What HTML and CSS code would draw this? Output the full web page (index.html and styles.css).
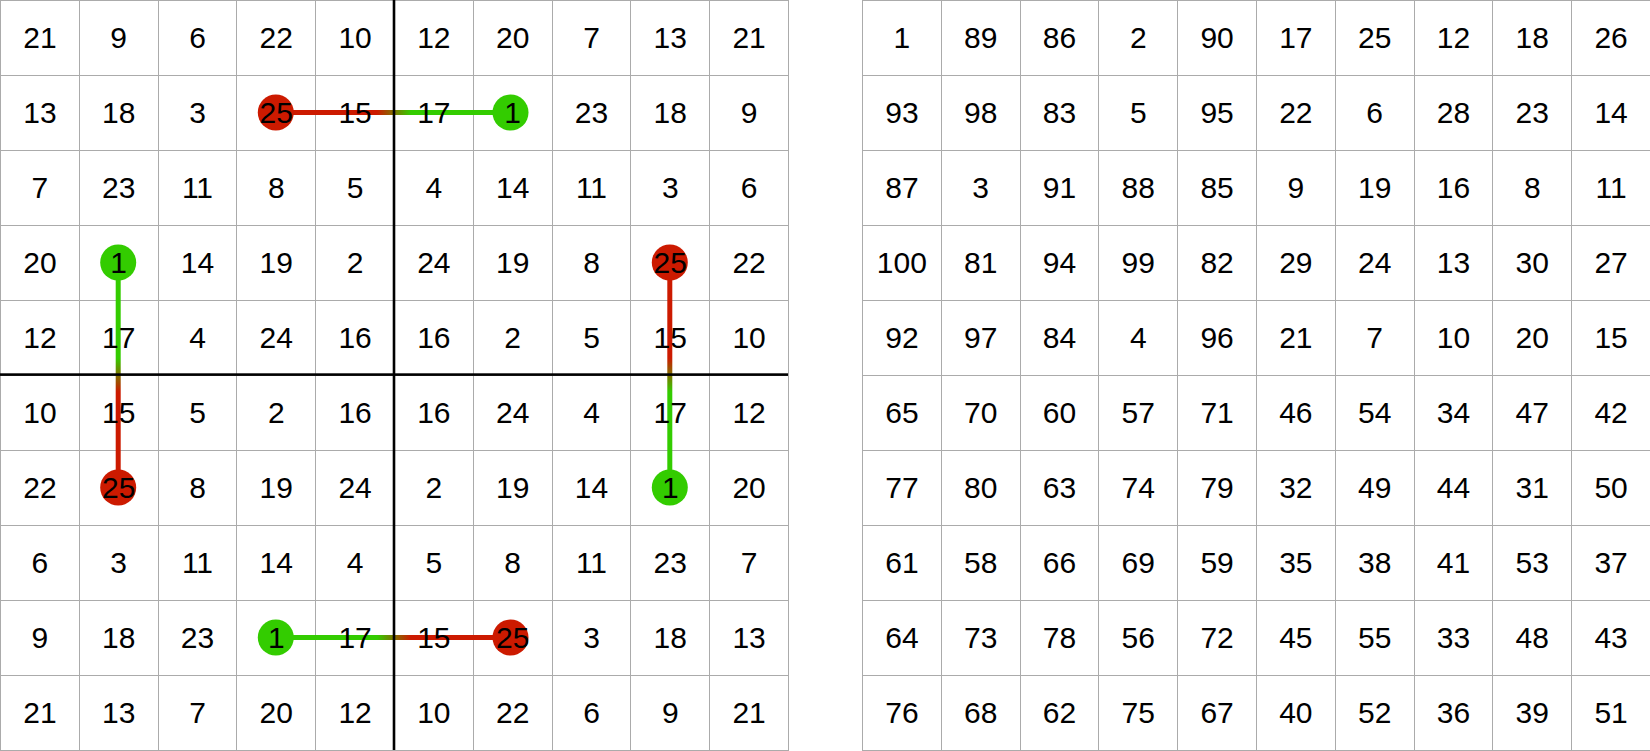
FILE: index.html
```html
<!DOCTYPE html>
<html>
<head>
<meta charset="utf-8">
<link rel="stylesheet" href="styles.css">
</head>
<body>
<div class="page">
  <div class="board board-left">
    <div class="c"><span>21</span></div><div class="c"><span>9</span></div><div class="c"><span>6</span></div><div class="c"><span>22</span></div><div class="c"><span>10</span></div><div class="c"><span>12</span></div><div class="c"><span>20</span></div><div class="c"><span>7</span></div><div class="c"><span>13</span></div><div class="c"><span>21</span></div>
    <div class="c"><span>13</span></div><div class="c"><span>18</span></div><div class="c"><span>3</span></div><div class="c"><span>25</span></div><div class="c"><span>15</span></div><div class="c"><span>17</span></div><div class="c"><span>1</span></div><div class="c"><span>23</span></div><div class="c"><span>18</span></div><div class="c"><span>9</span></div>
    <div class="c"><span>7</span></div><div class="c"><span>23</span></div><div class="c"><span>11</span></div><div class="c"><span>8</span></div><div class="c"><span>5</span></div><div class="c"><span>4</span></div><div class="c"><span>14</span></div><div class="c"><span>11</span></div><div class="c"><span>3</span></div><div class="c"><span>6</span></div>
    <div class="c"><span>20</span></div><div class="c"><span>1</span></div><div class="c"><span>14</span></div><div class="c"><span>19</span></div><div class="c"><span>2</span></div><div class="c"><span>24</span></div><div class="c"><span>19</span></div><div class="c"><span>8</span></div><div class="c"><span>25</span></div><div class="c"><span>22</span></div>
    <div class="c"><span>12</span></div><div class="c"><span>17</span></div><div class="c"><span>4</span></div><div class="c"><span>24</span></div><div class="c"><span>16</span></div><div class="c"><span>16</span></div><div class="c"><span>2</span></div><div class="c"><span>5</span></div><div class="c"><span>15</span></div><div class="c"><span>10</span></div>
    <div class="c"><span>10</span></div><div class="c"><span>15</span></div><div class="c"><span>5</span></div><div class="c"><span>2</span></div><div class="c"><span>16</span></div><div class="c"><span>16</span></div><div class="c"><span>24</span></div><div class="c"><span>4</span></div><div class="c"><span>17</span></div><div class="c"><span>12</span></div>
    <div class="c"><span>22</span></div><div class="c"><span>25</span></div><div class="c"><span>8</span></div><div class="c"><span>19</span></div><div class="c"><span>24</span></div><div class="c"><span>2</span></div><div class="c"><span>19</span></div><div class="c"><span>14</span></div><div class="c"><span>1</span></div><div class="c"><span>20</span></div>
    <div class="c"><span>6</span></div><div class="c"><span>3</span></div><div class="c"><span>11</span></div><div class="c"><span>14</span></div><div class="c"><span>4</span></div><div class="c"><span>5</span></div><div class="c"><span>8</span></div><div class="c"><span>11</span></div><div class="c"><span>23</span></div><div class="c"><span>7</span></div>
    <div class="c"><span>9</span></div><div class="c"><span>18</span></div><div class="c"><span>23</span></div><div class="c"><span>1</span></div><div class="c"><span>17</span></div><div class="c"><span>15</span></div><div class="c"><span>25</span></div><div class="c"><span>3</span></div><div class="c"><span>18</span></div><div class="c"><span>13</span></div>
    <div class="c"><span>21</span></div><div class="c"><span>13</span></div><div class="c"><span>7</span></div><div class="c"><span>20</span></div><div class="c"><span>12</span></div><div class="c"><span>10</span></div><div class="c"><span>22</span></div><div class="c"><span>6</span></div><div class="c"><span>9</span></div><div class="c"><span>21</span></div>

    <svg class="overlay" width="788" height="750" viewBox="0 0 788 750" xmlns="http://www.w3.org/2000/svg">
      <defs>
        <linearGradient id="h1" gradientUnits="userSpaceOnUse" x1="377" y1="0" x2="411" y2="0">
          <stop offset="0" stop-color="#cc1a00"/><stop offset="1" stop-color="#33cc00"/>
        </linearGradient>
        <linearGradient id="h2" gradientUnits="userSpaceOnUse" x1="377" y1="0" x2="411" y2="0">
          <stop offset="0" stop-color="#33cc00"/><stop offset="1" stop-color="#cc1a00"/>
        </linearGradient>
        <linearGradient id="v1" gradientUnits="userSpaceOnUse" x1="0" y1="358" x2="0" y2="392">
          <stop offset="0" stop-color="#33cc00"/><stop offset="1" stop-color="#cc1a00"/>
        </linearGradient>
        <linearGradient id="v2" gradientUnits="userSpaceOnUse" x1="0" y1="358" x2="0" y2="392">
          <stop offset="0" stop-color="#cc1a00"/><stop offset="1" stop-color="#33cc00"/>
        </linearGradient>
      </defs>
      <rect x="275.8" y="110" width="236.4" height="5" fill="url(#h1)"/>
      <rect x="275.8" y="635" width="236.4" height="5" fill="url(#h2)"/>
      <rect x="115.7" y="262.5" width="5" height="225" fill="url(#v1)"/>
      <rect x="667.3" y="262.5" width="5" height="225" fill="url(#v2)"/>
      <circle cx="275.8" cy="112.5" r="18" fill="#cc1a00"/>
      <circle cx="510.5" cy="112.5" r="18" fill="#33cc00"/>
      <circle cx="118.2" cy="262.5" r="18" fill="#33cc00"/>
      <circle cx="118.2" cy="487.5" r="18" fill="#cc1a00"/>
      <circle cx="669.8" cy="262.5" r="18" fill="#cc1a00"/>
      <circle cx="669.8" cy="487.5" r="18" fill="#33cc00"/>
      <circle cx="275.8" cy="637.5" r="18" fill="#33cc00"/>
      <circle cx="510.5" cy="637.5" r="18" fill="#cc1a00"/>
      <rect x="392.7" y="0" width="2.6" height="750" fill="#000"/>
      <rect x="0" y="373.3" width="788" height="2.6" fill="#000"/>
    </svg>
  </div>

  <div class="board board-right">
    <div class="c"><span>1</span></div><div class="c"><span>89</span></div><div class="c"><span>86</span></div><div class="c"><span>2</span></div><div class="c"><span>90</span></div><div class="c"><span>17</span></div><div class="c"><span>25</span></div><div class="c"><span>12</span></div><div class="c"><span>18</span></div><div class="c"><span>26</span></div>
    <div class="c"><span>93</span></div><div class="c"><span>98</span></div><div class="c"><span>83</span></div><div class="c"><span>5</span></div><div class="c"><span>95</span></div><div class="c"><span>22</span></div><div class="c"><span>6</span></div><div class="c"><span>28</span></div><div class="c"><span>23</span></div><div class="c"><span>14</span></div>
    <div class="c"><span>87</span></div><div class="c"><span>3</span></div><div class="c"><span>91</span></div><div class="c"><span>88</span></div><div class="c"><span>85</span></div><div class="c"><span>9</span></div><div class="c"><span>19</span></div><div class="c"><span>16</span></div><div class="c"><span>8</span></div><div class="c"><span>11</span></div>
    <div class="c"><span>100</span></div><div class="c"><span>81</span></div><div class="c"><span>94</span></div><div class="c"><span>99</span></div><div class="c"><span>82</span></div><div class="c"><span>29</span></div><div class="c"><span>24</span></div><div class="c"><span>13</span></div><div class="c"><span>30</span></div><div class="c"><span>27</span></div>
    <div class="c"><span>92</span></div><div class="c"><span>97</span></div><div class="c"><span>84</span></div><div class="c"><span>4</span></div><div class="c"><span>96</span></div><div class="c"><span>21</span></div><div class="c"><span>7</span></div><div class="c"><span>10</span></div><div class="c"><span>20</span></div><div class="c"><span>15</span></div>
    <div class="c"><span>65</span></div><div class="c"><span>70</span></div><div class="c"><span>60</span></div><div class="c"><span>57</span></div><div class="c"><span>71</span></div><div class="c"><span>46</span></div><div class="c"><span>54</span></div><div class="c"><span>34</span></div><div class="c"><span>47</span></div><div class="c"><span>42</span></div>
    <div class="c"><span>77</span></div><div class="c"><span>80</span></div><div class="c"><span>63</span></div><div class="c"><span>74</span></div><div class="c"><span>79</span></div><div class="c"><span>32</span></div><div class="c"><span>49</span></div><div class="c"><span>44</span></div><div class="c"><span>31</span></div><div class="c"><span>50</span></div>
    <div class="c"><span>61</span></div><div class="c"><span>58</span></div><div class="c"><span>66</span></div><div class="c"><span>69</span></div><div class="c"><span>59</span></div><div class="c"><span>35</span></div><div class="c"><span>38</span></div><div class="c"><span>41</span></div><div class="c"><span>53</span></div><div class="c"><span>37</span></div>
    <div class="c"><span>64</span></div><div class="c"><span>73</span></div><div class="c"><span>78</span></div><div class="c"><span>56</span></div><div class="c"><span>72</span></div><div class="c"><span>45</span></div><div class="c"><span>55</span></div><div class="c"><span>33</span></div><div class="c"><span>48</span></div><div class="c"><span>43</span></div>
    <div class="c"><span>76</span></div><div class="c"><span>68</span></div><div class="c"><span>62</span></div><div class="c"><span>75</span></div><div class="c"><span>67</span></div><div class="c"><span>40</span></div><div class="c"><span>52</span></div><div class="c"><span>36</span></div><div class="c"><span>39</span></div><div class="c"><span>51</span></div>
  </div>
</div>
</body>
</html>
```

FILE: styles.css
```css
html, body {
  margin: 0;
  padding: 0;
  background: #ffffff;
  overflow: hidden;
}

.page {
  display: flex;
  gap: 73px;
  width: 1650px;
  height: 751px;
}

.board {
  position: relative;
  z-index: 0;
  display: grid;
  grid-template-columns: repeat(10, 78.8px);
  grid-template-rows: repeat(10, 75px);
  width: 788px;
  height: 750px;
  border-right: 1px solid #ababab;
  border-bottom: 1px solid #ababab;
  flex: none;
  font-family: "Liberation Sans", Arial, sans-serif;
  font-size: 30px;
  color: #000;
}

.c {
  box-sizing: border-box;
  border-left: 1px solid #ababab;
  border-top: 1px solid #ababab;
  display: flex;
  align-items: center;
  justify-content: center;
}

.c span {
  position: relative;
  z-index: 2;
  line-height: 1;
}

.overlay {
  position: absolute;
  left: 0;
  top: 0;
  z-index: 1;
}
```
